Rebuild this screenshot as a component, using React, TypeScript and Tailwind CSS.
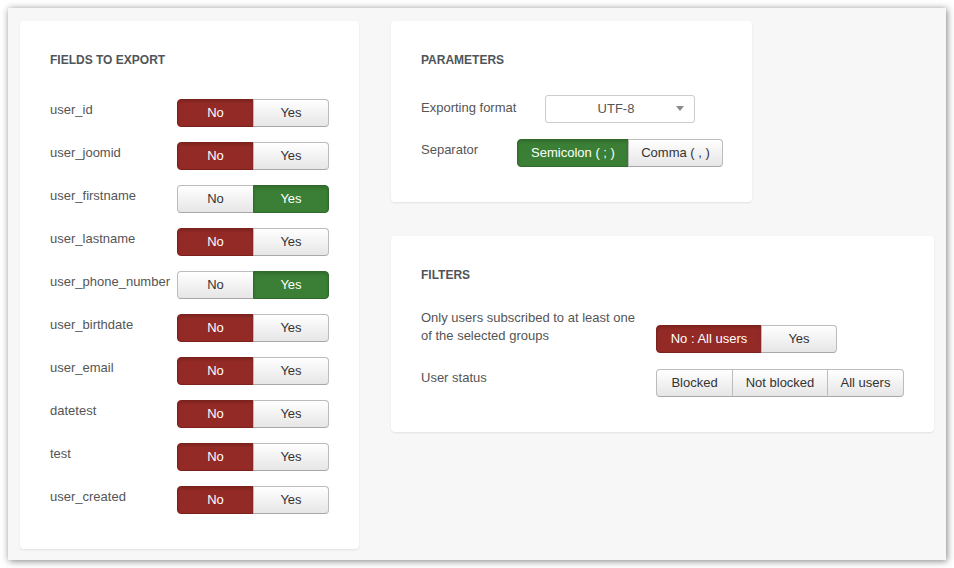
import React from "react";

type Tone = "red" | "green" | "plain";

const tones: Record<Tone, string> = {
  red: "bg-[#942a25] text-white border-[#7c221e] shadow-[inset_0_2px_3px_rgba(0,0,0,0.15)]",
  green: "bg-[#3a7f35] text-white border-[#2f6a2b] shadow-[inset_0_2px_3px_rgba(0,0,0,0.15)]",
  plain: "bg-linear-to-b from-white to-[#e6e6e6] text-[#333] border-[#bcbcbc] border-b-[#a8a8a8]",
};

type Opt = { label: string; w: string; tone: Tone };

const Group = ({ opts }: { opts: Opt[] }) => {
  return (
    <div className="flex shrink-0">
      {opts.map((o, i) => (
        <div
          key={o.label}
          className={`${o.w} ${tones[o.tone]} h-[28px] border flex items-center justify-center text-[13px] leading-[18px] ${
            i === 0 ? "rounded-l-[4px]" : "-ml-px"
          } ${i === opts.length - 1 ? "rounded-r-[4px]" : ""}`}
        >
          {o.label}
        </div>
      ))}
    </div>
  );
};

const fields: { name: string; yes: boolean }[] = [
  { name: "user_id", yes: false },
  { name: "user_joomid", yes: false },
  { name: "user_firstname", yes: true },
  { name: "user_lastname", yes: false },
  { name: "user_phone_number", yes: true },
  { name: "user_birthdate", yes: false },
  { name: "user_email", yes: false },
  { name: "datetest", yes: false },
  { name: "test", yes: false },
  { name: "user_created", yes: false },
];

const Card = ({ className, children }: { className: string; children: React.ReactNode }) => (
  <div className={`bg-white rounded-[4px] shadow-[0_1px_2px_rgba(0,0,0,0.09)] pt-[30px] px-[30px] ${className}`}>
    {children}
  </div>
);

const Heading = ({ children, mb }: { children: React.ReactNode; mb: string }) => (
  <h3 className={`text-[12px] leading-[18px] font-bold text-[#4f555a] uppercase ${mb}`}>{children}</h3>
);

export default function App() {
  return (
    <div className="bg-white p-2 h-[568px] font-['Liberation_Sans',Arial,sans-serif] text-[13px] text-[#555]">
      <div className="h-[552px] bg-[#f7f7f7] shadow-[1px_1px_7px_rgba(0,0,0,0.5)] flex gap-[32px] pt-[13px] px-[12px]">
        {/* left: fields */}
        <Card className="w-[339px] h-[528px] shrink-0">
          <Heading mb="mb-[30px]">Fields to export</Heading>
          <div className="flex flex-col gap-[15px]">
            {fields.map((f) => (
              <div key={f.name} className="flex items-start">
                <div className="w-[127px] shrink-0 pt-[2px] leading-[18px] whitespace-nowrap">{f.name}</div>
                <Group
                  opts={[
                    { label: "No", w: "w-[77px]", tone: f.yes ? "plain" : "red" },
                    { label: "Yes", w: "w-[76px]", tone: f.yes ? "green" : "plain" },
                  ]}
                />
              </div>
            ))}
          </div>
        </Card>

        {/* right column */}
        <div className="flex-1 flex flex-col gap-[34px]">
          <Card className="w-[361px] h-[181px]">
            <Heading mb="mb-[26px]">Parameters</Heading>
            <div className="flex items-start">
              <div className="w-[124px] shrink-0 pt-[4px] leading-[18px]">Exporting format</div>
              <div className="w-[150px] h-[28px] border border-[#ccc] rounded-[3px] bg-white relative flex items-center justify-center text-[#555]">
                <span className="pr-[8px]">UTF-8</span>
                <svg className="absolute right-[10px] top-[10px]" width="8" height="5" viewBox="0 0 8 5">
                  <path d="M0 0 L8 0 L4 5 Z" fill="#8a8a8a" />
                </svg>
              </div>
            </div>
            <div className="flex items-start mt-[16px]">
              <div className="w-[96px] shrink-0 pt-[2px] leading-[18px]">Separator</div>
              <Group
                opts={[
                  { label: "Semicolon ( ; )", w: "w-[112px]", tone: "green" },
                  { label: "Comma ( , )", w: "w-[95px]", tone: "plain" },
                ]}
              />
            </div>
          </Card>

          <Card className="h-[196px]">
            <Heading mb="mb-[25px]">Filters</Heading>
            <div className="flex items-start">
              <div className="w-[235px] shrink-0 leading-[18px]">
                Only users subscribed to at least one
                <br />
                of the selected groups
              </div>
              <div className="mt-[16px]">
                <Group
                  opts={[
                    { label: "No : All users", w: "w-[106px]", tone: "red" },
                    { label: "Yes", w: "w-[76px]", tone: "plain" },
                  ]}
                />
              </div>
            </div>
            <div className="flex items-start mt-[16px]">
              <div className="w-[235px] shrink-0 leading-[18px]">User status</div>
              <Group
                opts={[
                  { label: "Blocked", w: "w-[77px]", tone: "plain" },
                  { label: "Not blocked", w: "w-[96px]", tone: "plain" },
                  { label: "All users", w: "w-[77px]", tone: "plain" },
                ]}
              />
            </div>
          </Card>
        </div>
      </div>
    </div>
  );
}
